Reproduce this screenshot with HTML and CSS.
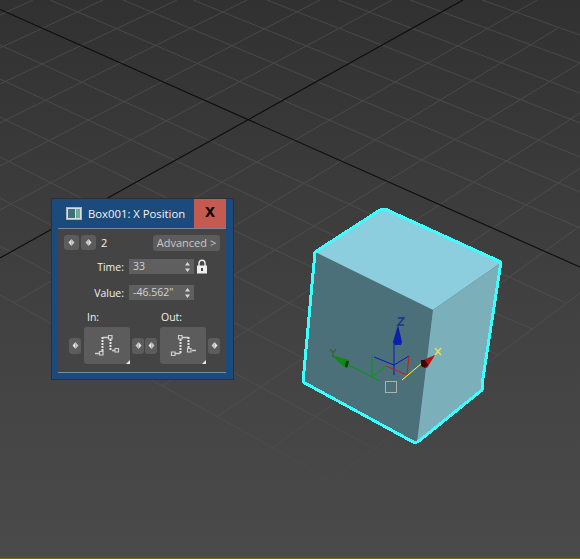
FILE: index.html
```html
<!DOCTYPE html>
<html lang="en">
<head>
<meta charset="utf-8">
<title>Box001: X Position</title>
<link rel="stylesheet" href="styles.css">
</head>
<body>
<main class="viewport">
  <svg class="scene" viewBox="0 0 580 559" width="580" height="559" aria-hidden="true">
    <defs>
      <linearGradient id="gridFade" gradientUnits="userSpaceOnUse" x1="0" y1="0" x2="0" y2="490">
        <stop offset="0" stop-color="#474747"/>
        <stop offset="0.5" stop-color="#4c4c4c"/>
        <stop offset="0.8" stop-color="#4d4d4d"/>
        <stop offset="1" stop-color="#494949"/>
      </linearGradient>
    </defs>
    <g class="grid-lines" stroke="url(#gridFade)">
      <path d="M482 0L580 35M410 0L580 63M338 0L580 93M267 0L580 123M193 0L580 157M123 0L580 192M50 0L580 228"/>
      <path d="M0 45L340 200L566 303M0 79L260 200L500 315L532 329M0 117L233 230L498 355M0 157L233 275L460 388M0 198L233 322L430 423M0 246L316 417L373 448M0 295L300 463L330 482"/>
      <path d="M33 0L0 15M103 0L0 48M177 0L0 84M247 0L0 123M320 0L0 166M392 0L0 210"/>
      <path d="M537 0L15 302M558 28L63 331M580 63L105 354M580 113L162 386M580 168L217 417M580 226L272 448M580 293L330 482"/>
    </g>
    <g class="axis-lines">
      <path d="M0 9.5L580 267"/>
      <path d="M463 0L0 258"/>
    </g>
    <g class="cube">
      <polygon class="face-left" points="315,252 433,310 417,443 303,382"/>
      <polygon class="face-edge" points="433,310 436,311 420,441 417,443"/>
      <polygon class="face-right" points="433,310 502,262 483,380 482,391 417,443"/>
      <polygon class="face-top" points="315,252 383,209 502,262 433,310"/>
      <polygon class="cube-outline" points="315,252 380,210 385,209 501,262 483,378 482,390 419,441 415,443 303,382"/>
    </g>
    <g class="gizmo">
      <path class="giz-green" d="M380 381L372 377L347 364M372 357V377L386 366"/>
      <path class="giz-blue" d="M394 375V342M374 357L394 365L409 356"/>
      <path class="giz-red" d="M386 366L407 375L409 356"/>
      <path class="giz-yellow" d="M402 380L422 363"/>
      <polygon class="cone-blue" points="398,325 402,342 401,345 395,345 393,342"/>
      <polygon class="cone-green" points="331,355 349,360 347,368 343,366"/>
      <polygon class="cone-dark-green" points="346,361 349,361 347,368 345,366"/>
      <polygon class="cone-red" points="435,355 427,368 421,365 421,361"/>
      <polygon class="cone-dark-red" points="421,360 425,360 428,365 425,368 421,366"/>
      <path class="label-z" d="M398 318H404L398 325H404"/>
      <path class="label-y" d="M330 349L333 353L336 349M333 353V357"/>
      <path class="label-x" d="M435 348L441 355M441 348L435 355"/>
      <rect class="pivot-box" x="385.5" y="381.5" width="11" height="11"/>
    </g>
  </svg>

  <section class="key-panel">
    <header class="key-title">
      <div class="key-title-main">
        <svg class="window-icon" viewBox="0 0 16 13" width="16" height="13" aria-hidden="true">
          <rect x="0.5" y="0.5" width="15" height="12" fill="#d8dfe0" stroke="#aeb8bd"/>
          <rect x="2" y="2" width="7" height="9" fill="#3f6f7a"/>
          <rect x="10" y="2" width="4" height="9" fill="#6fa79a"/>
        </svg>
        <span>Box001: X Position</span>
      </div>
      <button class="close-button" type="button">x</button>
    </header>

    <div class="key-body">
      <div class="row-key">
        <button class="spin-button" type="button"><svg class="spin-glyph" viewBox="0 0 7 7" width="7" height="7"><path d="M3.5 0V7L0.5 3.5Z"/><path d="M3.5 0V7L6.5 3.5Z" class="spin-dim"/></svg></button>
        <button class="spin-button" type="button"><svg class="spin-glyph" viewBox="0 0 7 7" width="7" height="7"><path d="M3.5 0V7L0.5 3.5Z" class="spin-dim"/><path d="M3.5 0V7L6.5 3.5Z"/></svg></button>
        <span class="key-number">2</span>
        <button class="advanced-button" type="button">Advanced &gt;</button>
      </div>

      <div class="row-field row-time">
        <label class="field-label">Time:</label>
        <div class="field-input">
          <span>33</span>
          <svg class="updown" viewBox="0 0 5 10" width="5" height="10"><path d="M2.5 0L5 3.5H0ZM2.5 10L0 6.5H5Z"/></svg>
        </div>
        <svg class="lock-icon" viewBox="0 0 12 15" width="12" height="15" aria-hidden="true">
          <path class="lock-shackle" d="M3 7V4.2C3 2.4 4.2 1.2 6 1.2S9 2.4 9 4.2V7"/>
          <path class="lock-body" fill-rule="evenodd" d="M1 6.5H11V14.5H1ZM5 9V12H7V9Z"/>
        </svg>
      </div>

      <div class="row-field row-value">
        <label class="field-label">Value:</label>
        <div class="field-input">
          <span>-46.562"</span>
          <svg class="updown" viewBox="0 0 5 10" width="5" height="10"><path d="M2.5 0L5 3.5H0ZM2.5 10L0 6.5H5Z"/></svg>
        </div>
      </div>

      <div class="row-tangent-labels">
        <span class="label-in">In:</span>
        <span class="label-out">Out:</span>
      </div>

      <div class="row-tangents">
        <button class="step-button" type="button"><svg class="spin-glyph" viewBox="0 0 7 7" width="7" height="7"><path d="M3.5 0V7L0.5 3.5Z"/><path d="M3.5 0V7L6.5 3.5Z" class="spin-dim"/></svg></button>
        <button class="tangent-button" type="button">
          <svg viewBox="0 0 46 37" width="46" height="37" aria-hidden="true">
            <path class="tan-solid" d="M11 26.5H16M28 23.5H31M19 10.5H24"/>
            <path class="tan-dash" d="M18.5 24V10M26.5 12V23"/>
            <path class="tan-box" d="M15.5 24.5h3.5v3.5h-3.5zM24.5 8.5h3.5v3.5h-3.5zM31 21.5h3.5v3.5h-3.5z"/>
          </svg>
        </button>
        <button class="step-button" type="button"><svg class="spin-glyph" viewBox="0 0 7 7" width="7" height="7"><path d="M3.5 0V7L0.5 3.5Z" class="spin-dim"/><path d="M3.5 0V7L6.5 3.5Z"/></svg></button>
        <button class="step-button" type="button"><svg class="spin-glyph" viewBox="0 0 7 7" width="7" height="7"><path d="M3.5 0V7L0.5 3.5Z"/><path d="M3.5 0V7L6.5 3.5Z" class="spin-dim"/></svg></button>
        <button class="tangent-button" type="button">
          <svg viewBox="0 0 46 37" width="46" height="37" aria-hidden="true">
            <path class="tan-solid" d="M15 26.5H20.5M22 10.5H28.5M32 23.5H36"/>
            <path class="tan-dash" d="M20.5 26V12M28.5 10V22"/>
            <path class="tan-box" d="M11.5 25h3.5v3.5h-3.5zM18.5 8.5h3.5v3.5h-3.5zM27.5 21.5h3.5v3.5h-3.5z"/>
          </svg>
        </button>
        <button class="step-button" type="button"><svg class="spin-glyph" viewBox="0 0 7 7" width="7" height="7"><path d="M3.5 0V7L0.5 3.5Z" class="spin-dim"/><path d="M3.5 0V7L6.5 3.5Z"/></svg></button>
      </div>
    </div>
  </section>
  <div class="bottom-rule"></div>
</main>
</body>
</html>
```

FILE: styles.css
```css
* { box-sizing: border-box; }
html, body { margin: 0; padding: 0; }
body { width: 580px; height: 559px; overflow: hidden; font-family: "Open Sans", "Noto Sans", sans-serif; }

.viewport {
  position: relative;
  width: 580px;
  height: 559px;
  overflow: hidden;
  background: linear-gradient(180deg, #313131 0%, #3c3c3c 36%, #444444 68%, #4a4a4a 100%);
}

.scene { position: absolute; inset: 0; display: block; }
.grid-lines path { fill: none; stroke-width: 1; }
.axis-lines path { fill: none; stroke: #0c0c0c; stroke-width: 1.1; }

.face-left { fill: #4c707a; }
.face-edge { fill: #6593a0; }
.face-right { fill: #7bafba; }
.face-top { fill: #8ccedd; }
.cube-outline { fill: none; stroke: #3cffff; stroke-width: 3; stroke-linejoin: round; shape-rendering: crispEdges; }

.gizmo path { fill: none; stroke-width: 1; }
.giz-green { stroke: #009a00; }
.giz-blue { stroke: #0018c8; }
.giz-red { stroke: #d01818; }
.giz-yellow { stroke: #ffff20; }
.cone-blue { fill: #0a1faa; }
.cone-green { fill: #0e8a14; }
.cone-dark-green { fill: #063a08; }
.cone-red { fill: #b80f0f; }
.cone-dark-red { fill: #3c0606; }
.gizmo .label-z { stroke: #1e2f8a; stroke-width: 1.4; }
.gizmo .label-y { stroke: #3f5f3f; stroke-width: 1.4; }
.gizmo .label-x { stroke: #e8e050; stroke-width: 1.4; }
.pivot-box { fill: none; stroke: #b0b0b0; stroke-width: 1; }

.bottom-rule { position: absolute; left: 0; right: 0; bottom: 0; height: 1px; background: #7b6a1e; }

.key-panel {
  position: absolute;
  left: 51px;
  top: 198px;
  width: 183px;
  height: 182px;
  display: flex;
  flex-direction: column;
  padding: 0 7px 6px 6px;
  background: #1b4a7d;
  border: 1px solid #2c2f33;
}

.key-title {
  height: 29px;
  flex: none;
  display: flex;
  align-items: stretch;
}
.key-title-main {
  flex: 1;
  display: flex;
  align-items: center;
  gap: 6px;
  padding-left: 8px;
  color: #f2f4f6;
  font-size: 11.3px;
  white-space: nowrap;
}
.window-icon { flex: none; }
.close-button {
  width: 32px;
  margin: 0;
  padding: 0 0 5px;
  border: 0;
  background: #c45a50;
  color: #060606;
  font: 700 18px/1 "Liberation Sans", sans-serif;
}

.key-body {
  flex: 1;
  display: flex;
  flex-direction: column;
  background: #444444;
  border-top: 1px solid #7a8694;
  border-bottom: 1px solid #6f8db0;
  padding: 5px 6px 0;
  color: #f0f0f0;
  font-size: 10.5px;
}

button { font-family: inherit; }

.row-key { display: flex; align-items: center; height: 17px; }
.spin-button {
  width: 15px;
  height: 15px;
  margin-right: 2px;
  padding: 0;
  border: 0;
  border-radius: 3px;
  background: #5c5c5c;
  display: flex;
  align-items: center;
  justify-content: center;
}
.spin-glyph path { fill: #e6e6e6; }
.spin-glyph path.spin-dim { fill: #c6c6c6; }
.key-number { margin-left: 3px; font-size: 11px; color: #f4f4f4; }
.advanced-button {
  margin-left: auto;
  width: 67px;
  height: 16px;
  padding: 0;
  border: 0;
  border-radius: 3px;
  background: #5c5c5c;
  color: #c9c9c9;
  font-size: 11px;
  line-height: 16px;
}

.row-field { display: flex; align-items: center; height: 15px; }
.row-time { margin-top: 8px; }
.row-value { margin-top: 11px; }
.field-label { width: 65px; flex: none; padding-right: 5px; text-align: right; color: #f0f0f0; font-size: 10.5px; }
.field-input {
  width: 65px;
  height: 15px;
  flex: none;
  display: flex;
  align-items: center;
  justify-content: space-between;
  padding: 0 4px 0 4px;
  background: #5f5f5f;
  color: #d2d2d2;
  font-size: 10.5px;
  line-height: 15px;
}
.updown path { fill: #d8d8d8; }
.lock-icon { margin-left: 2px; flex: none; }
.lock-shackle { fill: none; stroke: #eeeeee; stroke-width: 1.4; }
.lock-body { fill: #eeeeee; }

.row-tangent-labels { display: flex; height: 14px; margin-top: 10px; align-items: center; font-size: 10.5px; }
.label-in { margin-left: 23px; width: 74px; }

.row-tangents { display: flex; align-items: center; height: 37px; margin-top: 3px; padding-left: 5px; }
.step-button {
  width: 12px;
  height: 16px;
  flex: none;
  padding: 0;
  border: 0;
  border-radius: 3px;
  background: #5c5c5c;
  display: flex;
  align-items: center;
  justify-content: center;
}
.step-button + .tangent-button { margin-left: 3px; }
.tangent-button + .step-button { margin-left: 2px; }
.step-button + .step-button { margin-left: 1px; }
.tangent-button {
  position: relative;
  width: 46px;
  height: 37px;
  flex: none;
  padding: 0;
  border: 0;
  border-radius: 3px;
  background: #5c5c5c;
}
.tangent-button svg { display: block; }
.tangent-button::after {
  content: "";
  position: absolute;
  right: 0;
  bottom: 0;
  border-style: solid;
  border-width: 0 0 4px 4px;
  border-color: transparent transparent #e8e8e8 transparent;
}
.tan-solid { fill: none; stroke: #cfcfcf; stroke-width: 1.6; }
.tan-dash { fill: none; stroke: #e4e4e4; stroke-width: 2; stroke-dasharray: 2 1; }
.tan-box { fill: #5c5c5c; stroke: #cfcfcf; stroke-width: 1.2; }
```
